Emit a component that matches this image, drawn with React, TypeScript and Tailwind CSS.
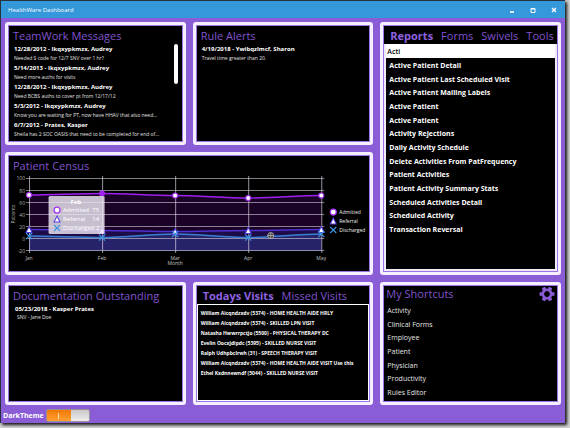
import { useState } from "react";
import clsx from "clsx";

type Message = { date: string; name: string; text: string };

const messages: Message[] = [
    { date: "12/28/2012", name: "Ikqxypkmzx, Audrey", text: "Needed S code for 12/7 SNV over 1 hr?" },
    { date: "5/14/2013", name: "Ikqxypkmzx, Audrey", text: "Need more auths for visits" },
    { date: "12/28/2012", name: "Ikqxypkmzx, Audrey", text: "Need BCBS auths to cover pt from 12/17/12" },
    { date: "5/3/2012", name: "Ikqxypkmzx, Audrey", text: "Know you are waiting for PT, now have HHAV that also need..." },
    { date: "6/7/2012", name: "Prates, Kasper", text: "Sheila has 2 SOC OASIS that need to be completed for end of..." },
];

const reports = [
    "Active Patient Detail",
    "Active Patient Last Scheduled Visit",
    "Active Patient Mailing Labels",
    "Active Patient",
    "Active Patient",
    "Activity Rejections",
    "Daily Activity Schedule",
    "Delete Activities From PatFrequency",
    "Patient Activities",
    "Patient Activity Summary Stats",
    "Scheduled Activities Detail",
    "Scheduled Activity",
    "Transaction Reversal",
];

const visits = [
    "William Aicqndzxdv (5374) - HOME HEALTH AIDE HRLY",
    "William Aicqndzxdv (5374) - SKILLED LPN VISIT",
    "Natasha Hwwrrpctjo (5500) - PHYSICAL THERAPY DC",
    "Evelin Oocxjdipdc (5395) - SKILLED NURSE VISIT",
    "Ralph Udhpbclrwh (31) - SPEECH THERAPY VISIT",
    "William Aicqndzxdv (5374) - HOME HEALTH AIDE VISIT Use this",
    "Ethel Kxdnnewndf (5044) - SKILLED NURSE VISIT",
];

const shortcuts = ["Activity", "Clinical Forms", "Employee", "Patient", "Physician", "Productivity", "Rules Editor"];

const Panel = ({ className, children }: { className?: string; children: React.ReactNode }) => (
    <section className={clsx("min-w-0 rounded-[3px] border-[3px] border-[#f6efff] bg-[#9a74e2] p-px", className)}>
        <div className="flex h-full flex-col overflow-hidden bg-black">{children}</div>
    </section>
);

const Title = ({ children }: { children: React.ReactNode }) => (
    <h2 className="text-[11px] leading-4 text-[#8154cf]">{children}</h2>
);

const Tabs = ({ names }: { names: string[] }) => {
    const [active, setActive] = useState(names[0]);
    return (
        <div className="flex shrink-0 gap-2 px-[6px] pt-[2px] text-[11px] leading-4 whitespace-nowrap">
            {names.map((name) => (
                <button
                    key={name}
                    type="button"
                    onClick={() => setActive(name)}
                    className={name === active ? "font-bold text-[#9060e0]" : "text-[#8154cf]"}
                >
                    {name}
                </button>
            ))}
        </div>
    );
};

const MessageItem = ({ date, name, text }: Message) => (
    <li className="whitespace-nowrap">
        <p className="text-[6px] leading-[9px] font-bold text-white">
            {date} - {name}
        </p>
        <p className="text-[5px] leading-[8px] text-[#e0e0e0]">{text}</p>
    </li>
);

const Circle = ({ x, y, r = 3 }: { x: number; y: number; r?: number }) => (
    <circle cx={x} cy={y} r={r} fill="#fff" stroke="#a030f0" strokeWidth="1.2" />
);

const Triangle = ({ x, y }: { x: number; y: number }) => (
    <path d={`M${x} ${y - 3}l3 6h-6z`} fill="#fff" stroke="#5038e0" strokeWidth="1" />
);

const Cross = ({ x, y }: { x: number; y: number }) => (
    <path d={`M${x - 3} ${y - 3}l6 6m0-6l-6 6`} fill="none" stroke="#3d93e0" strokeWidth="1.2" />
);

const months = ["Jan", "Feb", "Mar", "Apr", "May"];
const monthX = [29, 102, 175, 248, 321];
const admittedY = [50, 48.5, 50.5, 53, 50.5];
const referralY = [84.5, 85.5, 86.5, 85.5, 84.5];
const dischargedY = [91, 92.5, 89, 92.5, 89];

// smooth curve through the month values
const curve = (ys: number[]) =>
    ys
        .map((y, i) => {
            if (i === 0) return `M${monthX[0]} ${y}`;
            const step = monthX[i] - monthX[i - 1];
            return `C${monthX[i - 1] + step / 3} ${ys[i - 1]} ${monthX[i] - step / 3} ${y} ${monthX[i]} ${y}`;
        })
        .join("");

const area = (ys: number[]) => `${curve(ys)}V106H29Z`;

const CensusChart = () => (
    <svg viewBox="9 29 360 96" className="block w-full" role="img" aria-label="Patient Census">
        <path d={area(admittedY)} fill="#1b0328" />
        <path d={area(referralY)} fill="#1d0c48" />
        <path d={area(dischargedY)} fill="#27236a" />
        {[100, 80, 60, 40, 20, 0, -20].map((v, i) => (
            <g key={v}>
                <path d={`M26 ${33.5 + i * 12}H324`} stroke="#d8d0e0" strokeOpacity="0.6" />
                <text x="25" y={35.5 + i * 12} textAnchor="end" fontSize="5" fill="#b0b0b0">
                    {v}
                </text>
            </g>
        ))}
        {months.map((m, i) => (
            <g key={m}>
                <path d={`M${monthX[i] + 0.5} 31V108`} stroke="#d8d0e0" strokeOpacity="0.7" />
                <text x={monthX[i]} y="115" textAnchor="middle" fontSize="5" fill="#c0c0c0">
                    {m}
                </text>
            </g>
        ))}
        <text x="175" y="120" textAnchor="middle" fontSize="5" fill="#c0c0c0">
            Month
        </text>
        <text transform="translate(15 69) rotate(-90)" textAnchor="middle" fontSize="5" fill="#b0b0b0">
            Patients
        </text>
        <g fill="none" strokeWidth="1.4">
            <path d={curve(admittedY)} stroke="#a020f0" />
            <path d={curve(referralY)} stroke="#4c30d0" />
            <path d={curve(dischargedY)} stroke="#3a80d0" />
        </g>
        {monthX.map((x, i) => (
            <g key={x}>
                {i === 1 ? <circle cx={x} cy={admittedY[i]} r="3" fill="#a020f0" /> : <Circle x={x} y={admittedY[i]} r={2.5} />}
                <Triangle x={x} y={referralY[i]} />
                <Cross x={x} y={dischargedY[i]} />
            </g>
        ))}
        <g stroke="#c0c0c0" fill="#333" strokeWidth="0.8">
            <circle cx="270.5" cy="90.5" r="3" />
            <path d="M267.5 90.5h6M270.5 87.5v6" />
        </g>
        <rect x="48.5" y="51" width="56" height="38" rx="1.5" fill="#e9e4ee" fillOpacity="0.84" />
        <g fontSize="6" fill="#fff">
            <text x="76" y="59" textAnchor="middle" fontWeight="700">
                Feb
            </text>
            <text x="63" y="67">Admitted</text>
            <text x="99" y="67" textAnchor="end">75</text>
            <text x="63" y="76">Referral</text>
            <text x="99" y="76" textAnchor="end">14</text>
            <text x="63" y="85">Discharged 2</text>
        </g>
        <Circle x={57} y={65} />
        <Triangle x={57} y={74} />
        <Cross x={57} y={83} />
        <Circle x={333} y={67} />
        <Triangle x={333} y={76} />
        <Cross x={333} y={85} />
        <g fontSize="5" fill="#f0f0f0">
            <text x="339" y="69">Admitted</text>
            <text x="339" y="78">Referral</text>
            <text x="339" y="87">Discharged</text>
        </g>
    </svg>
);

const Gear = () => (
    <svg viewBox="-8 -8 16 16" className="size-4" fill="#8a5cd6">
        <circle r="4.2" fill="none" stroke="#8a5cd6" strokeWidth="2.6" />
        {[0, 60, 120, 180, 240, 300].map((a) => (
            <rect key={a} x="-1.8" y="-7.5" width="3.6" height="3.2" rx="0.6" transform={`rotate(${a + 30})`} />
        ))}
    </svg>
);

const App: React.FC = () => {
    const [query, setQuery] = useState("Acti");
    const [dark, setDark] = useState(true);

    return (
        <div className="min-h-screen bg-[#d4d4d4] pr-[5px] pb-[5px] font-['Open_Sans',sans-serif]">
            <div className="flex flex-col border-t border-l border-[#28323c] bg-[#8a5cd6] shadow-[2px_2px_3px_#111]">
                <header className="flex h-[17px] items-center bg-[#3498db] pr-[5px] pl-[7px] text-white">
                    <h1 className="flex-1 text-[6px] leading-4">HealthWare Dashboard</h1>
                    <div className="flex gap-[9px]">
                        <button type="button" aria-label="Minimize">
                            <svg viewBox="0 0 12 12" className="size-3">
                                <path d="M4 8h4" stroke="#fff" strokeWidth="1.6" />
                            </svg>
                        </button>
                        <button type="button" aria-label="Maximize">
                            <svg viewBox="0 0 12 12" className="size-3">
                                <path d="M4 4.5h4v4h-4zM4 5h4" fill="none" stroke="#fff" />
                            </svg>
                        </button>
                        <button type="button" aria-label="Close">
                            <svg viewBox="0 0 12 12" className="size-3">
                                <path d="M4 4l4 4m0-4l-4 4" stroke="#fff" strokeWidth="1.4" />
                            </svg>
                        </button>
                    </div>
                </header>

                <main className="grid grid-cols-3 grid-rows-[123px_123px_123px] gap-[7px] p-1">
                    <Panel>
                        <div className="px-1 pt-[2px]">
                            <Title>TeamWork Messages</Title>
                            <div className="flex justify-between">
                                <ul className="flex min-w-0 flex-col gap-[2px] pt-px pl-px">
                                    {messages.map((m, i) => (
                                        <MessageItem key={i} {...m} />
                                    ))}
                                </ul>
                                <div className="h-10 w-1 shrink-0 rounded-full bg-white" />
                            </div>
                        </div>
                    </Panel>

                    <Panel>
                        <div className="px-1 pt-[2px]">
                            <Title>Rule Alerts</Title>
                            <ul className="pt-px pl-px">
                                <MessageItem date="4/19/2018" name="Ywibqzlmcf, Sharon" text="Travel time greater than 20." />
                            </ul>
                        </div>
                    </Panel>

                    <Panel className="row-span-2">
                        <Tabs names={["Reports", "Forms", "Swivels", "Tools"]} />
                        <div className="flex flex-1 flex-col border-2 border-t-0 border-[#efe9f8]">
                            <input
                                aria-label="Search reports"
                                value={query}
                                onChange={(e) => setQuery(e.target.value)}
                                className="h-[14px] w-full bg-white px-px text-[7px] font-semibold text-black outline-none"
                            />
                            <ul className="flex h-[178px] flex-col justify-between pt-px pl-[3px] text-[7px] font-bold text-white">
                                {reports.map((r, i) => (
                                    <li key={i} className="leading-[13px] whitespace-nowrap">
                                        {r}
                                    </li>
                                ))}
                            </ul>
                        </div>
                    </Panel>

                    <Panel className="col-span-2">
                        <div className="px-1 pt-[2px]">
                            <Title>Patient Census</Title>
                        </div>
                        <CensusChart />
                    </Panel>

                    <Panel>
                        <div className="px-1 pt-[2px]">
                            <Title>Documentation Outstanding</Title>
                            <div className="pt-px pl-[2px]">
                                <p className="text-[6px] leading-[9px] font-bold text-white">05/23/2018 - Kasper Prates</p>
                                <p className="pl-[2px] text-[5px] leading-[7px] text-[#e0e0e0]">SNV - Jane Doe</p>
                            </div>
                        </div>
                    </Panel>

                    <Panel>
                        <Tabs names={["Todays Visits", "Missed Visits"]} />
                        <ul className="flex-1 border border-white px-[3px] pt-[3px] text-[5px] font-bold text-white">
                            {visits.map((v, i) => (
                                <li key={i} className="leading-[10px] whitespace-nowrap">
                                    {v}
                                </li>
                            ))}
                        </ul>
                    </Panel>

                    <Panel>
                        <div className="flex items-center justify-between px-[2px]">
                            <Title>My Shortcuts</Title>
                            <button type="button" aria-label="Shortcut settings">
                                <Gear />
                            </button>
                        </div>
                        <ul className="flex h-[97px] flex-col justify-between pt-[2px] pl-[3px] text-[7px] text-[#e4e4e4]">
                            {shortcuts.map((s) => (
                                <li key={s} className="leading-[13px]">
                                    <a href="#">{s}</a>
                                </li>
                            ))}
                        </ul>
                    </Panel>
                </main>

                <label className="flex h-[14px] items-start gap-[2px] pl-[2px] text-[7px] leading-[14px] font-bold text-white">
                    DarkTheme
                    <input type="checkbox" role="switch" checked={dark} onChange={() => setDark(!dark)} className="peer sr-only" />
                    <span className="flex h-[13px] w-11 flex-row-reverse overflow-hidden rounded-[2px] border border-[#9a8f9a] peer-checked:flex-row">
                        <span className="flex flex-1 items-center justify-center bg-linear-to-b from-[#f07800] to-[#ffa030]">
                            <span className="h-[6px] w-px bg-[#ffe0b0]" />
                        </span>
                        <span className="w-[18px] bg-linear-to-b from-[#c8c8c8] to-[#eeeeee]" />
                    </span>
                </label>
            </div>
        </div>
    );
};

export default App;
